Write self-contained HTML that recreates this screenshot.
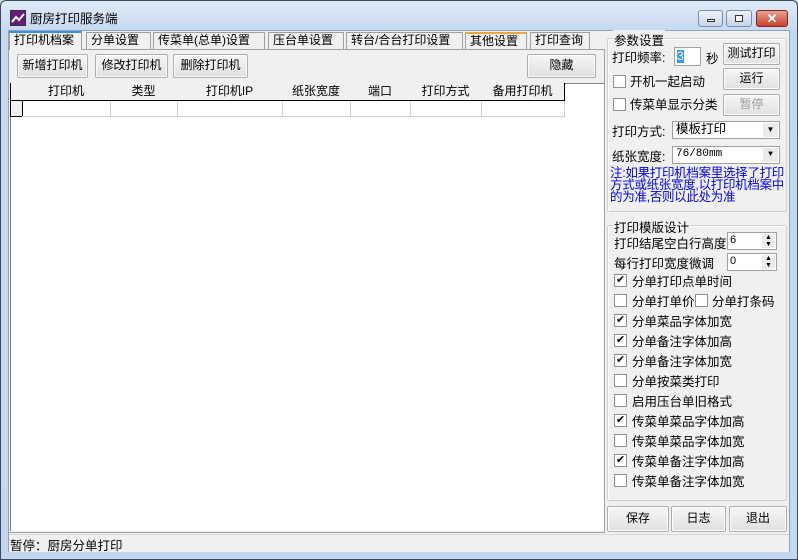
<!DOCTYPE html>
<html><head><meta charset="utf-8">
<style>
*{box-sizing:border-box;margin:0;padding:0}
body{width:798px;height:560px;overflow:hidden;background:#c3d8ee;font:12px "Liberation Sans","Noto Sans CJK SC","WenQuanYi Zen Hei",sans-serif;color:#000;position:relative}
.a{position:absolute;white-space:nowrap}
.win{position:absolute;left:0;top:0;width:798px;height:560px;border:1px solid #3a4a5c;border-radius:6px 6px 0 0;background:linear-gradient(#dfeaf6,#c6d9ee 30px,#c3d8ee)}
.client{position:absolute;left:8px;top:30px;width:782px;height:522px;background:#f0f0f0;border:1px solid #8ea3bc}
.btn{position:absolute;background:linear-gradient(#f6f6f6,#e0e0e0);border:1px solid #adadad;border-radius:2px;text-align:center;box-shadow:inset 0 0 0 1px #fcfcfc}
.tab{position:absolute;top:32px;height:18px;border:1px solid #a0a0a0;border-bottom:none;background:#f0f0f0;padding:0 4px;line-height:15px;font-size:12px}
.cb{position:absolute;width:13px;height:13px;border:1px solid #8f8f8f;background:#fff;font-size:11px;line-height:11px;text-align:center}
.grp{position:absolute;border:1px solid #d0d0d0;border-radius:2px;box-shadow:inset 1px 1px 0 #fff}
.lab{position:absolute;background:#f0f0f0;padding:0 1px;font-size:12.5px}
.hd{position:absolute;top:83px;height:18px;border-right:1px solid #000;border-bottom:1px solid #000;background:#f0f0f0;text-align:center;line-height:16px}
.cell{position:absolute;top:101px;height:16px;border-right:1px solid #d0d0d0;border-bottom:1px solid #d0d0d0}
.combo{position:absolute;height:18px;background:#fff;border:1px solid #a0a0a0;padding-left:3px;line-height:15px}
.combo i{position:absolute;right:1px;top:1px;width:15px;height:14px;background:#eaeaea;font-style:normal;font-size:8px;text-align:center;line-height:14px}
.t{font-size:12.5px}
.sp{position:absolute;right:1px;top:1px;width:13px;height:14px;background:#eaeaea;font-size:7px;line-height:7px;text-align:center}
</style></head><body>
<div class="win"></div>
<div class="a" style="left:10px;top:10px;width:16px;height:16px;background:#6a1a7a;border:1px solid #333"><svg width="14" height="14"><polyline points="1,11 5,6 8,9 13,3" fill="none" stroke="#fff" stroke-width="2"/></svg></div>
<div class="a t" style="left:30px;top:8px">厨房打印服务端</div>
<div class="a" style="left:698px;top:10px;width:25px;height:17px;border:1px solid #7b8ea8;border-radius:3px;background:linear-gradient(#eef3fa,#c5d4e8)"><div style="position:absolute;left:8px;top:8px;width:8px;height:3px;border:1px solid #333;background:#fff"></div></div>
<div class="a" style="left:726px;top:10px;width:26px;height:17px;border:1px solid #7b8ea8;border-radius:3px;background:linear-gradient(#eef3fa,#c5d4e8)"><div style="position:absolute;left:8px;top:4px;width:8px;height:7px;border:1px solid #333;background:#fff"></div></div>
<div class="a" style="left:756px;top:10px;width:32px;height:17px;border:1px solid #7a2a20;border-radius:3px;background:linear-gradient(#e8a090,#c8402c);color:#fff;text-align:center;font-weight:bold;line-height:15px;font-size:13px">✕</div>
<div class="client"></div>
<div class="tab" style="left:86px;width:65px">分单设置</div>
<div class="tab" style="left:153px;width:112px">传菜单(总单)设置</div>
<div class="tab" style="left:268px;width:76px">压台单设置</div>
<div class="tab" style="left:346px;width:117px">转台/合台打印设置</div>
<div class="tab" style="left:465px;width:62px;border-top:2px solid #f5a33c">其他设置</div>
<div class="tab" style="left:530px;width:60px">打印查询</div>
<div class="a" style="left:8px;top:49px;width:597px;height:484px;border:1px solid #a0a0a0;background:#f0f0f0"></div>
<div class="tab" style="left:9px;top:31px;width:73px;height:19px;border-top:2px solid #3c8ee0;z-index:2">打印机档案</div>
<div class="btn" style="left:17px;top:54px;width:71px;height:24px;line-height:21px">新增打印机</div>
<div class="btn" style="left:95px;top:54px;width:73px;height:24px;line-height:21px">修改打印机</div>
<div class="btn" style="left:173px;top:54px;width:75px;height:24px;line-height:21px">删除打印机</div>
<div class="btn" style="left:527px;top:54px;width:69px;height:24px;line-height:21px">隐藏</div>
<div class="a" style="left:10px;top:83px;width:594px;height:448px;background:#fff;border-left:1px solid #808080;border-top:1px solid #808080"></div>
<div class="hd" style="left:10px;width:13px;border-left:1px solid #000"></div>
<div class="hd" style="left:22px;width:89px">打印机</div>
<div class="hd" style="left:110px;width:68px">类型</div>
<div class="hd" style="left:177px;width:106px">打印机IP</div>
<div class="hd" style="left:282px;width:69px">纸张宽度</div>
<div class="hd" style="left:350px;width:61px">端口</div>
<div class="hd" style="left:410px;width:72px">打印方式</div>
<div class="hd" style="left:481px;width:84px">备用打印机</div>
<div class="cell" style="left:10px;width:13px;background:#f0f0f0;border-color:#000;border-left:1px solid #000"></div>
<div class="cell" style="left:22px;width:89px"></div>
<div class="cell" style="left:110px;width:68px"></div>
<div class="cell" style="left:177px;width:106px"></div>
<div class="cell" style="left:282px;width:69px"></div>
<div class="cell" style="left:350px;width:61px"></div>
<div class="cell" style="left:410px;width:72px"></div>
<div class="cell" style="left:481px;width:84px"></div>
<div class="grp" style="left:607px;top:38px;width:180px;height:174px"></div>
<div class="lab" style="left:613px;top:30px">参数设置</div>
<div class="a t" style="left:612px;top:47px">打印频率:</div>
<div class="a" style="left:674px;top:47px;width:27px;height:19px;background:#fff;border:1px solid #a0a0a0"><span style="position:absolute;left:2px;top:2px;background:#3399ff;color:#fff;line-height:13px;font-size:12px">3</span></div>
<div class="a t" style="left:706px;top:48px">秒</div>
<div class="btn" style="left:723px;top:43px;width:57px;height:22px;line-height:19px">测试打印</div>
<div class="cb" style="left:613px;top:75px"></div><div class="a t" style="left:630px;top:71px">开机一起启动</div>
<div class="btn" style="left:723px;top:68px;width:57px;height:22px;line-height:19px">运行</div>
<div class="cb" style="left:613px;top:98px"></div><div class="a t" style="left:630px;top:94px">传菜单显示分类</div>
<div class="btn" style="left:723px;top:94px;width:57px;height:22px;line-height:19px;color:#a0a0a0">暂停</div>
<div class="a t" style="left:612px;top:121px">打印方式:</div>
<div class="combo" style="left:672px;top:121px;width:108px;font-size:12.5px">模板打印<i>▼</i></div>
<div class="a t" style="left:612px;top:146px">纸张宽度:</div>
<div class="combo" style="left:672px;top:146px;width:108px;font-family:'Liberation Mono',monospace;font-size:11px">76/80mm<i>▼</i></div>
<div class="a" style="left:610px;top:167px;color:#0000ff;font-size:12.5px;line-height:12px;white-space:normal;width:178px;letter-spacing:-0.3px">注:如果打印机档案里选择了打印方式或纸张宽度,以打印机档案中的为准,否则以此处为准</div>
<div class="grp" style="left:607px;top:225px;width:180px;height:276px"></div>
<div class="lab" style="left:613px;top:217px">打印模版设计</div>
<div class="a t" style="left:614px;top:233px">打印结尾空白行高度</div>
<div class="a" style="left:727px;top:232px;width:50px;height:18px;background:#fff;border:1px solid #a0a0a0;padding-left:2px;font-size:11px;line-height:15px">6<span class="sp">▲<br>▼</span></div>
<div class="a t" style="left:614px;top:253px">每行打印宽度微调</div>
<div class="a" style="left:727px;top:253px;width:50px;height:18px;background:#fff;border:1px solid #a0a0a0;padding-left:2px;font-size:11px;line-height:15px">0<span class="sp">▲<br>▼</span></div>
<div class="cb" style="left:614px;top:274px">✔</div><div class="a t" style="left:632px;top:271px">分单打印点单时间</div>
<div class="cb" style="left:614px;top:294px"></div><div class="a t" style="left:632px;top:291px">分单打单价</div>
<div class="cb" style="left:695px;top:294px"></div><div class="a t" style="left:712px;top:291px">分单打条码</div>
<div class="cb" style="left:614px;top:314px">✔</div><div class="a t" style="left:632px;top:311px">分单菜品字体加宽</div>
<div class="cb" style="left:614px;top:334px">✔</div><div class="a t" style="left:632px;top:331px">分单备注字体加高</div>
<div class="cb" style="left:614px;top:354px">✔</div><div class="a t" style="left:632px;top:351px">分单备注字体加宽</div>
<div class="cb" style="left:614px;top:374px"></div><div class="a t" style="left:632px;top:371px">分单按菜类打印</div>
<div class="cb" style="left:614px;top:394px"></div><div class="a t" style="left:632px;top:391px">启用压台单旧格式</div>
<div class="cb" style="left:614px;top:414px">✔</div><div class="a t" style="left:632px;top:411px">传菜单菜品字体加高</div>
<div class="cb" style="left:614px;top:434px"></div><div class="a t" style="left:632px;top:431px">传菜单菜品字体加宽</div>
<div class="cb" style="left:614px;top:454px">✔</div><div class="a t" style="left:632px;top:451px">传菜单备注字体加高</div>
<div class="cb" style="left:614px;top:474px"></div><div class="a t" style="left:632px;top:471px">传菜单备注字体加宽</div>
<div class="btn" style="left:607px;top:506px;width:62px;height:26px;line-height:23px">保存</div>
<div class="btn" style="left:671px;top:506px;width:55px;height:26px;line-height:23px">日志</div>
<div class="btn" style="left:729px;top:506px;width:58px;height:26px;line-height:23px">退出</div>
<div class="a" style="left:9px;top:534px;width:780px;height:18px;border-top:1px solid #d8d8d8;background:#f0f0f0"></div>
<div class="a t" style="left:10px;top:535px">暂停：厨房分单打印</div>
</body></html>
